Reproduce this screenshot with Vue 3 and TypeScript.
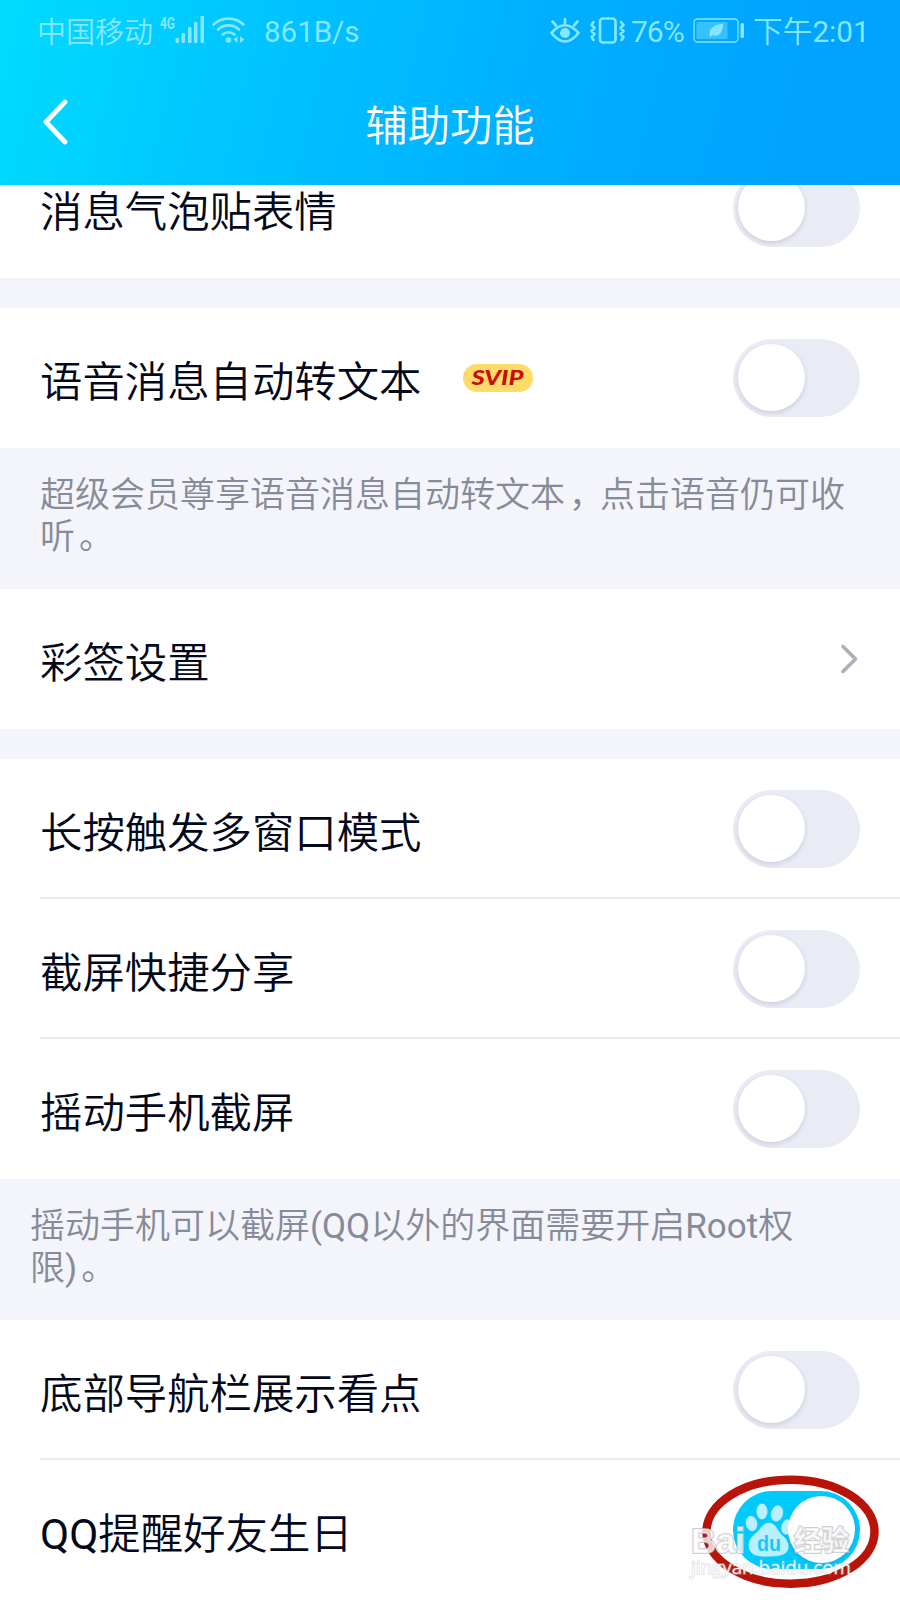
<script setup lang="ts">
interface Item {
  kind: 'switch' | 'link' | 'gap' | 'note'
  text?: string
  on?: boolean
  svip?: boolean
  line?: boolean
  clipped?: boolean
  inset?: boolean
}

const items: Item[] = [
  { kind: 'switch', text: '消息气泡贴表情', clipped: true },
  { kind: 'gap' },
  { kind: 'switch', text: '语音消息自动转文本', svip: true },
  { kind: 'note', text: '超级会员尊享语音消息自动转文本，点击语音仍可收\n听。' },
  { kind: 'link', text: '彩签设置' },
  { kind: 'gap' },
  { kind: 'switch', text: '长按触发多窗口模式', line: true },
  { kind: 'switch', text: '截屏快捷分享', line: true },
  { kind: 'switch', text: '摇动手机截屏' },
  { kind: 'note', text: '摇动手机可以截屏(QQ以外的界面需要开启Root权\n限)。', inset: true },
  { kind: 'switch', text: '底部导航栏展示看点', line: true },
  { kind: 'switch', text: 'QQ提醒好友生日', on: true },
]

// Latin runs use the regular weight; full-width punctuation sits slightly right in its cell.
const parts = (text = ''): string[] => text.split(/([，。]|[A-Za-z()]+)/).filter(Boolean)
const partClass = (part: string): string => {
  if (part === '，' || part === '。') return 'punct'
  return /^[A-Za-z()]+$/.test(part) ? 'latin' : 'han'
}
</script>

<template>
  <div class="screen">
    <header class="header">
      <div class="status">
        <span class="carrier">中国移动</span>
        <svg class="signal" width="88" height="30" viewBox="0 0 88 30">
          <text x="0" y="13.500" class="net" textLength="15" lengthAdjust="spacingAndGlyphs">4G</text>
          <g fill="currentColor">
            <rect x="15.500" y="23" width="3.500" height="5" rx="1" />
            <rect x="21.500" y="18" width="3.500" height="10" rx="1" />
            <rect x="28" y="12" width="3.500" height="16" rx="1" />
            <rect x="34" y="7" width="3.500" height="21" rx="1" />
            <rect x="40.500" y="1" width="3.500" height="27" rx="1" />
            <circle cx="68.500" cy="25" r="2.800" />
            <path d="M73.500 24.500l4-3.500v7zM80 21l4.500 3.500-4.500 3.500z" />
          </g>
          <g fill="none" stroke="currentColor" stroke-width="2.600" stroke-linecap="round">
            <path d="M53.500 9.500a22 22 0 0 1 30 0" />
            <path d="M58 14.500a15.500 15.500 0 0 1 21 0" />
            <path d="M62.500 19.500a9 9 0 0 1 12 0" />
          </g>
        </svg>
        <span class="speed">861B/s</span>
        <span class="spacer"></span>
        <svg class="sys" width="76" height="30" viewBox="0 0 76 30">
          <g fill="none" stroke="currentColor" stroke-width="2.700" stroke-linecap="round" stroke-linejoin="round">
            <path d="M1.500 17Q15 1.500 28.500 17Q15 34 1.500 17z" />
            <path d="M15 7V3M6 9.500L2.500 5.500M24 9.500l3.500-4" />
            <rect x="50" y="2.500" width="15.500" height="24" rx="3" />
            <path d="M43.500 6l-2 3 3 3-3 3 3 3-3 3 2 3M71 6l2.500 3-3 3 3 3-3 3 3 3-2 3" stroke-width="2.600" />
          </g>
          <circle cx="15" cy="17" r="5" fill="currentColor" />
        </svg>
        <span class="percent">76%</span>
        <svg class="battery" width="52" height="26" viewBox="0 0 52 26">
          <rect x="1" y="1" width="44" height="23" rx="3.500" fill="none" stroke="currentColor" stroke-width="1.300" />
          <rect x="3.500" y="4" width="31" height="17" rx="1" fill="currentColor" opacity=".4" />
          <path d="M17 19C15 11 20 7 30 5.500C30 15 26 19 19.500 17.500L27 9.500L18 18.500z" fill="currentColor" />
          <rect x="47.500" y="5" width="3.500" height="15" rx="1.500" fill="currentColor" />
        </svg>
        <span class="clock">下午<span class="latin">2:01</span></span>
      </div>
      <div class="navbar">
        <svg class="back" width="26" height="48" viewBox="0 0 26 48">
          <path d="M23 4L4 24l19 20" fill="none" stroke="#fff" stroke-width="4.800" stroke-linecap="round" stroke-linejoin="round" />
        </svg>
        <h1 class="title">辅助功能</h1>
      </div>
    </header>

    <main class="list">
      <template v-for="(item, i) in items" :key="i">
        <div v-if="item.kind === 'gap'" class="gap"></div>
        <p v-else-if="item.kind === 'note'" class="note" :class="{ inset: item.inset }"><span v-for="(part, j) in parts(item.text)" :key="j" :class="partClass(part)">{{ part }}</span></p>
        <div v-else class="row" :class="{ line: item.line, clipped: item.clipped }">
          <span class="label"><span v-for="(part, j) in parts(item.text)" :key="j" :class="partClass(part)">{{ part }}</span></span>
          <svg v-if="item.svip" class="svip" width="70" height="28" viewBox="0 0 70 28">
            <rect width="70" height="28" rx="14" fill="#ffdc68" />
            <text x="8.500" y="21" textLength="52" lengthAdjust="spacingAndGlyphs">SVIP</text>
          </svg>
          <span class="spacer"></span>
          <span v-if="item.kind === 'switch'" class="switch" :class="{ on: item.on }"><i class="knob"></i></span>
          <svg v-else class="chevron" width="18" height="30" viewBox="0 0 18 30">
            <path d="M3 2.500L15.500 15 3 27.500" fill="none" stroke="#adafb9" stroke-width="3.600" stroke-linecap="round" stroke-linejoin="round" />
          </svg>
        </div>
      </template>
    </main>

    <svg class="mark" width="220" height="140" viewBox="0 0 220 140">
      <ellipse cx="110.500" cy="71.700" rx="84" ry="52" fill="none" stroke="#b91409" stroke-width="8.500" />
      <g class="brand">
        <text x="11" y="93" font-size="35" textLength="54" lengthAdjust="spacingAndGlyphs">Bai</text>
        <text class="han" x="114" y="91" font-size="28" textLength="55" lengthAdjust="spacingAndGlyphs">经验</text>
      </g>
      <g fill="#fff" fill-opacity=".72" stroke="#d4e6ec" stroke-opacity=".5" stroke-width=".7">
        <ellipse cx="71.500" cy="63.500" rx="5.500" ry="7.500" transform="rotate(-12 71.500 63.500)" />
        <ellipse cx="82" cy="51.500" rx="5.300" ry="7.700" />
        <ellipse cx="97" cy="53.500" rx="5.800" ry="8" transform="rotate(14 97 53.500)" />
        <ellipse cx="107" cy="67" rx="5.500" ry="7.500" transform="rotate(12 107 67)" />
        <path d="M89 63C82 63 80 71 74 75C67 80 67 92 75 95C80 97 99 97 104 94C111 90 109 81 103 76C97 71 96 63 89 63z" />
      </g>
      <text class="du" x="77" y="91" textLength="24" lengthAdjust="spacingAndGlyphs">du</text>
      <text class="url" x="11" y="114" textLength="160" lengthAdjust="spacingAndGlyphs">jingyan.baidu.com</text>
    </svg>
  </div>
</template>

<style>
body {
  margin: 0;
}
</style>

<style scoped>
.screen {
  position: relative;
  width: 900px;
  height: 1600px;
  overflow: hidden;
  background: #fff;
  color: #03081a;
  font-family: Roboto, "Noto Sans CJK SC", sans-serif;
  font-weight: 350;
}

.latin {
  font-weight: 400;
}

.header {
  height: 185px;
  background: linear-gradient(104deg, #00dcff 0%, #00c3ff 30%, #00aeff 61%, #00a2ff 92%, #00a2ff 100%);
}

.status {
  display: flex;
  align-items: center;
  box-sizing: border-box;
  height: 62px;
  padding: 0 32px 0 37px;
  color: #87e6ff;
  font-size: 29px;
  line-height: 62px;
  white-space: nowrap;
}

.carrier {
  width: 123px;
  padding-top: 3px;
}

.signal {
  flex: none;
  margin-top: -2px;
  overflow: visible;
}

.net {
  fill: currentColor;
  font: 700 16px Roboto, sans-serif;
}

.speed {
  margin-left: 16px;
  padding-top: 2px;
  font-size: 29.5px;
  font-weight: 400;
}

.spacer {
  flex: 1;
}

.sys {
  flex: none;
  margin-right: 5px;
}

.percent {
  width: 62px;
  padding-top: 2px;
  font-size: 30px;
  font-weight: 400;
  letter-spacing: -1px;
}

.battery {
  flex: none;
  margin-right: 8px;
}

.clock {
  width: 115px;
  padding-top: 2px;
  font-size: 29.7px;
}

.navbar {
  position: relative;
  display: flex;
  align-items: center;
  justify-content: center;
  height: 123px;
}

.back {
  position: absolute;
  left: 42px;
  top: 36px;
}

.title {
  margin: 0;
  padding-top: 6px;
  color: #fff;
  font-size: 42.3px;
  font-weight: inherit;
  line-height: 117px;
}

.row {
  position: relative;
  display: flex;
  align-items: center;
  box-sizing: border-box;
  height: 140px;
  padding: 0 40px;
  background: #fff;
}

.row.line::after {
  content: "";
  position: absolute;
  left: 40px;
  right: 0;
  bottom: 0;
  height: 2px;
  background: #ebecee;
}

.row.clipped {
  height: 93px;
  align-items: flex-end;
  overflow: hidden;
}

.row.clipped .label {
  line-height: 64px;
  margin-bottom: 33px;
}

.row.clipped .switch {
  margin-bottom: 31px;
}

.label {
  font-size: 42.4px;
  white-space: nowrap;
}

.svip {
  margin-left: 41px;
}

.svip text {
  fill: #c90d0d;
  font: italic 900 21px Lato, sans-serif;
}

.switch {
  flex: none;
  display: flex;
  box-sizing: border-box;
  width: 127px;
  height: 78px;
  padding: 5px;
  border-radius: 39px;
  background: #e9ebf5;
  overflow: hidden;
}

.knob {
  width: 67px;
  height: 67px;
  border-radius: 50%;
  background: #fff;
  box-shadow: 0 2px 5px rgba(80, 85, 130, 0.2);
}

.switch.on {
  justify-content: flex-end;
  background: #00cafc;
}

.chevron {
  margin-right: 2px;
}

.gap {
  height: 30px;
  background: #f4f5fa;
}

.note {
  box-sizing: border-box;
  height: 141px;
  margin: 0;
  padding: 27px 0 0 40px;
  background: #f4f5fa;
  color: #878a99;
  font-size: 35px;
  line-height: 42px;
  white-space: pre;
}

.punct {
  margin-left: 4px;
  letter-spacing: -4px;
}

.note.inset {
  padding-left: 30px;
}

.mark {
  position: absolute;
  left: 680px;
  top: 1460px;
}

.brand text {
  fill: rgba(255, 255, 255, 0.75);
  stroke: rgba(190, 193, 198, 0.75);
  stroke-width: 2.2px;
  paint-order: stroke;
  font-family: "Liberation Sans", "Noto Sans CJK SC", sans-serif;
  font-weight: 700;
}

.du {
  fill: #19c9f5;
  font: 700 22px "Liberation Sans", sans-serif;
}

.url {
  fill: rgba(255, 255, 255, 0.85);
  stroke: rgba(190, 193, 198, 0.5);
  stroke-width: 1.4px;
  paint-order: stroke;
  font: 400 18.500px "Open Sans", sans-serif;
}
</style>
